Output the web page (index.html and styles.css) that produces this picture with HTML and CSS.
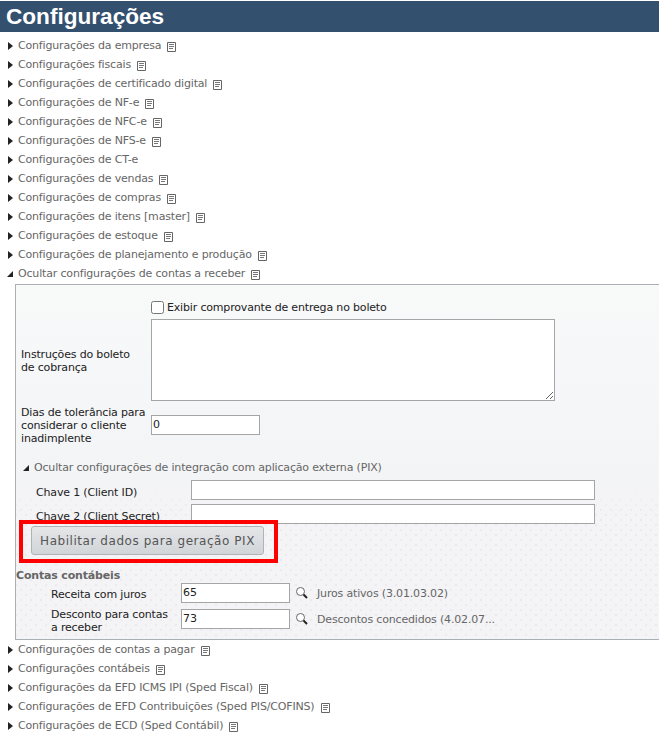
FILE: index.html
```html
<!DOCTYPE html>
<html>
    <head>
        <link rel="stylesheet" href="styles.css">
        <title>Configurações</title>
    </head>
    <body>
        <svg class="defs" width="0" height="0">
            <symbol id="note" viewBox="0 0 10 10">
                <path d="M0.5 0.5H8.5V9.5H0.5Z" fill="none" stroke="#666" stroke-width="1"/>
                <path d="M2 2.5H7 M2 4.5H7 M2 6.5H6" fill="none" stroke="#777" stroke-width="1"/>
            </symbol>
            <symbol id="lens" viewBox="0 0 12 12">
                <circle cx="4.5" cy="4.5" r="4" fill="#fff" stroke="#666" stroke-width="1"/>
                <path d="M7.5 7.5L11 11" stroke="#222" stroke-width="2"/>
            </symbol>
        </svg>

        <h1 class="title">Configurações</h1>

        <ul class="sections">
            <li><i class="closed"></i>Configurações da empresa<svg class="note"><use href="#note"/></svg></li>
            <li><i class="closed"></i>Configurações fiscais<svg class="note"><use href="#note"/></svg></li>
            <li><i class="closed"></i>Configurações de certificado digital<svg class="note"><use href="#note"/></svg></li>
            <li><i class="closed"></i>Configurações de NF-e<svg class="note"><use href="#note"/></svg></li>
            <li><i class="closed"></i>Configurações de NFC-e<svg class="note"><use href="#note"/></svg></li>
            <li><i class="closed"></i>Configurações de NFS-e<svg class="note"><use href="#note"/></svg></li>
            <li><i class="closed"></i>Configurações de CT-e</li>
            <li><i class="closed"></i>Configurações de vendas<svg class="note"><use href="#note"/></svg></li>
            <li><i class="closed"></i>Configurações de compras<svg class="note"><use href="#note"/></svg></li>
            <li><i class="closed"></i>Configurações de itens [master]<svg class="note"><use href="#note"/></svg></li>
            <li><i class="closed"></i>Configurações de estoque<svg class="note"><use href="#note"/></svg></li>
            <li><i class="closed"></i>Configurações de planejamento e produção<svg class="note"><use href="#note"/></svg></li>
            <li><i class="open"></i>Ocultar configurações de contas a receber<svg class="note"><use href="#note"/></svg></li>
        </ul>

        <div class="panel">
            <div class="row check-row">
                <label class="field-label"></label>
                <span class="check"><input type="checkbox">Exibir comprovante de entrega no boleto</span>
            </div>
            <div class="row text-row">
                <label class="field-label">Instruções do boleto<br>de cobrança</label>
                <textarea></textarea>
            </div>
            <div class="row days-row">
                <label class="field-label">Dias de tolerância para<br>considerar o cliente<br>inadimplente</label>
                <input class="short" type="text" value="0">
            </div>

            <div class="pix">
                <div class="pix-head"><i class="open"></i>Ocultar configurações de integração com aplicação externa (PIX)</div>
                <div class="key-row"><label>Chave 1 (Client ID)</label><input type="text"></div>
                <div class="key-row"><label>Chave 2 (Client Secret)</label><input type="text"></div>
                <div class="enable">
                    <button type="button">Habilitar dados para geração PIX</button>
                    <div class="highlight"></div>
                </div>
            </div>

            <h4 class="accounts">Contas contábeis</h4>
            <div class="acc-row">
                <label>Receita com juros</label>
                <input class="short" type="text" value="65">
                <svg class="lens"><use href="#lens"/></svg>
                <span>Juros ativos (3.01.03.02)</span>
            </div>
            <div class="acc-row">
                <label class="tall">Desconto para contas<br>a receber</label>
                <input class="short" type="text" value="73">
                <svg class="lens"><use href="#lens"/></svg>
                <span>Descontos concedidos (4.02.07...</span>
            </div>
        </div>

        <ul class="sections after">
            <li><i class="closed"></i>Configurações de contas a pagar<svg class="note"><use href="#note"/></svg></li>
            <li><i class="closed"></i>Configurações contábeis<svg class="note"><use href="#note"/></svg></li>
            <li><i class="closed"></i>Configurações da EFD ICMS IPI (Sped Fiscal)<svg class="note"><use href="#note"/></svg></li>
            <li><i class="closed"></i>Configurações de EFD Contribuições (Sped PIS/COFINS)<svg class="note"><use href="#note"/></svg></li>
            <li><i class="closed"></i>Configurações de ECD (Sped Contábil)<svg class="note"><use href="#note"/></svg></li>
            <li><i class="closed"></i>Configurações de segurança<svg class="note"><use href="#note"/></svg></li>
        </ul>
    </body>
</html>
```

FILE: styles.css
```css
html {
    height: 100%;
}
body {
    margin: 0;
    height: 100vh;
    overflow: hidden;
    background-color: #fff;
    font-family: "DejaVu Sans", Tahoma, sans-serif;
    font-size: 11px;
    letter-spacing: -0.17px;
    color: #222;
}

.defs {
    display: block;
    height: 0;
}

.title {
    margin: 1px 0 0 0;
    height: 31px;
    padding-left: 6px;
    background-color: #34506f;
    color: #fff;
    font-family: "Liberation Sans", Arial, sans-serif;
    font-size: 22.6px;
    font-weight: bold;
    letter-spacing: 0;
    line-height: 31px;
}

.sections {
    list-style-type: none;
    margin: 0;
    padding: 4px 0 0 0;
}
.sections.after {
    padding-top: 0;
}
.sections li {
    display: flex;
    align-items: center;
    height: 19px;
    padding-left: 8px;
    color: #666;
    white-space: nowrap;
}

.closed {
    width: 0;
    height: 0;
    margin-right: 5px;
    border-left: 5px solid #222;
    border-top: 4px solid transparent;
    border-bottom: 4px solid transparent;
}
.open {
    width: 0;
    height: 0;
    margin-left: -1px;
    margin-right: 5px;
    border-left: 6px solid transparent;
    border-bottom: 6px solid #222;
}

.note {
    width: 10px;
    height: 10px;
    margin-left: 6px;
    margin-top: 2px;
}

.panel {
    height: 356px;
    box-sizing: border-box;
    margin: 1px 0 0 15px;
    padding-top: 16px;
    border: 1px solid #a9b0b6;
    border-right: 0;
    background-color: #f4f4f6;
    background-image:
        linear-gradient(#f8f9f9, #f3f4f6 200px, #f4f4f6 205px, rgba(244, 244, 246, 0) 225px),
        radial-gradient(circle, #ebebee 1px, transparent 1px),
        radial-gradient(circle, #ebebee 1px, transparent 1px);
    background-size: 100% 100%, 10px 10px, 10px 10px;
    background-position: 0 0, 0 0, 5px 5px;
}

input[type="text"], textarea {
    box-sizing: border-box;
    margin: 0;
    padding: 0 1px 1px;
    border: 1px solid #a5a5a5;
    background-color: #fff;
    font-family: inherit;
    font-size: 11px;
    color: #222;
}

.row {
    display: flex;
    align-items: center;
}
.field-label {
    width: 130px;
    margin-left: 5px;
    line-height: 13px;
    flex-shrink: 0;
}
.check-row {
    height: 13px;
}
.check {
    display: flex;
    align-items: center;
}
.check input {
    width: 13px;
    height: 13px;
    margin: 0 3px 0 0;
}
.text-row {
    margin-top: 5px;
}
.text-row .field-label {
    padding-top: 2px;
}
textarea {
    display: block;
    width: 404px;
    height: 82px;
}
.days-row {
    margin-top: 5px;
}
.days-row input {
    margin-bottom: 1px;
}
.short {
    width: 109px;
    height: 20px;
}

.pix {
    margin-top: 15px;
}
.pix-head {
    display: flex;
    align-items: center;
    height: 15px;
    padding-left: 8px;
    color: #666;
}
.key-row {
    display: flex;
    align-items: center;
    height: 20px;
    margin-bottom: 4px;
    padding-left: 20px;
}
.pix-head + .key-row {
    margin-top: 5px;
}
.key-row label {
    width: 155px;
    padding-top: 5px;
}
.key-row input {
    width: 404px;
    height: 20px;
}

.enable {
    position: relative;
    width: 233px;
    margin: -2px 0 0 15px;
}
.enable button {
    display: block;
    width: 233px;
    height: 29px;
    padding: 0;
    border: 1px solid #b0b4b8;
    border-radius: 3px;
    background-image: linear-gradient(#e4e6e8, #d2d5d8);
    font-family: inherit;
    font-size: 12px;
    letter-spacing: 0.55px;
    color: #555;
}
.highlight {
    position: absolute;
    left: -12px;
    top: -6px;
    width: 251px;
    height: 35px;
    border: 4px solid #f00;
}

.accounts {
    margin: 14px 0 0 0;
    font-size: 11px;
    font-weight: bold;
    line-height: 13px;
    color: #666;
}
.acc-row {
    display: flex;
    align-items: center;
    height: 20px;
    margin-bottom: 6px;
    padding-left: 35px;
}
.accounts + .acc-row {
    margin-top: 1px;
}
.acc-row label {
    width: 130px;
    padding-top: 2px;
    line-height: 13px;
    flex-shrink: 0;
}
.acc-row label.tall {
    padding-top: 4px;
}
.acc-row span {
    color: #666;
}
.lens {
    width: 12px;
    height: 12px;
    margin: 0 9px 0 6px;
}
```
